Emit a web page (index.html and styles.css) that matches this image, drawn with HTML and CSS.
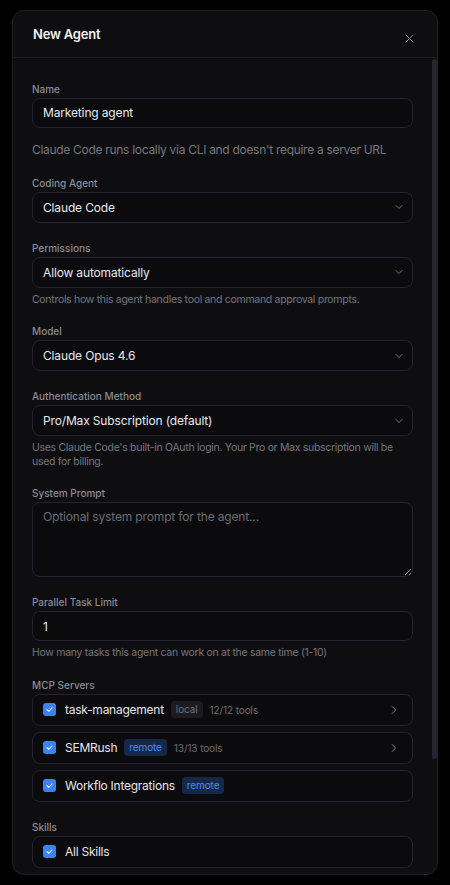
FILE: index.html
```html
<!DOCTYPE html>
<html lang="en">
<head>
<meta charset="utf-8">
<title>New Agent</title>
<link rel="stylesheet" href="styles.css">
</head>
<body>
<div class="overlay">
  <section class="dialog">
    <header class="dialog-header">
      <h2 class="dialog-title">New Agent</h2>
      <button class="close-btn" aria-label="Close">
        <svg width="10" height="10" viewBox="0 0 10 10"><path d="M1 1 9 9M9 1 1 9" stroke="currentColor" stroke-width="1.1" stroke-linecap="round"/></svg>
      </button>
    </header>
    <div class="dialog-body">
      <div class="field">
        <label class="label">Name</label>
        <input class="control input" type="text" value="Marketing agent">
      </div>
      <p class="note">Claude Code runs locally via CLI and doesn't require a server URL</p>

      <div class="field">
        <label class="label">Coding Agent</label>
        <div class="control select"><span>Claude Code</span>
          <svg class="chev-down" width="8" height="8" viewBox="0 0 8 8"><path d="M1 2.5 4 5.5 7 2.5" fill="none" stroke="currentColor" stroke-width="0.9" stroke-linecap="round" stroke-linejoin="round"/></svg>
        </div>
      </div>

      <div class="field">
        <label class="label">Permissions</label>
        <div class="control select"><span>Allow automatically</span>
          <svg class="chev-down" width="8" height="8" viewBox="0 0 8 8"><path d="M1 2.5 4 5.5 7 2.5" fill="none" stroke="currentColor" stroke-width="0.9" stroke-linecap="round" stroke-linejoin="round"/></svg>
        </div>
        <p class="help">Controls how this agent handles tool and command approval prompts.</p>
      </div>

      <div class="field">
        <label class="label">Model</label>
        <div class="control select"><span>Claude Opus 4.6</span>
          <svg class="chev-down" width="8" height="8" viewBox="0 0 8 8"><path d="M1 2.5 4 5.5 7 2.5" fill="none" stroke="currentColor" stroke-width="0.9" stroke-linecap="round" stroke-linejoin="round"/></svg>
        </div>
      </div>

      <div class="field">
        <label class="label">Authentication Method</label>
        <div class="control select"><span>Pro/Max Subscription (default)</span>
          <svg class="chev-down" width="8" height="8" viewBox="0 0 8 8"><path d="M1 2.5 4 5.5 7 2.5" fill="none" stroke="currentColor" stroke-width="0.9" stroke-linecap="round" stroke-linejoin="round"/></svg>
        </div>
        <p class="help">Uses Claude Code's built-in OAuth login. Your Pro or Max subscription will be used for billing.</p>
      </div>

      <div class="field">
        <label class="label">System Prompt</label>
        <textarea class="control textarea" placeholder="Optional system prompt for the agent..."></textarea>
      </div>

      <div class="field">
        <label class="label">Parallel Task Limit</label>
        <input class="control input" type="text" value="1">
        <p class="help">How many tasks this agent can work on at the same time (1-10)</p>
      </div>

      <div class="field">
        <label class="label">MCP Servers</label>
        <div class="list">
          <div class="row">
            <span class="check"><svg width="9" height="9" viewBox="0 0 10 10"><path d="M2.2 5.2 4.2 7 7.8 3.2" fill="none" stroke="#fff" stroke-width="1.2" stroke-linecap="round" stroke-linejoin="round"/></svg></span>
            <span class="row-name">task-management</span>
            <span class="badge badge-local">local</span>
            <span class="meta">12/12 tools</span>
            <svg class="chev-right" width="16" height="16" viewBox="0 0 16 16"><path d="M6.2 4.5 9.6 8 6.2 11.5" fill="none" stroke="currentColor" stroke-width="1" stroke-linecap="round" stroke-linejoin="round"/></svg>
          </div>
          <div class="row">
            <span class="check"><svg width="9" height="9" viewBox="0 0 10 10"><path d="M2.2 5.2 4.2 7 7.8 3.2" fill="none" stroke="#fff" stroke-width="1.2" stroke-linecap="round" stroke-linejoin="round"/></svg></span>
            <span class="row-name">SEMRush</span>
            <span class="badge badge-remote">remote</span>
            <span class="meta">13/13 tools</span>
            <svg class="chev-right" width="16" height="16" viewBox="0 0 16 16"><path d="M6.2 4.5 9.6 8 6.2 11.5" fill="none" stroke="currentColor" stroke-width="1" stroke-linecap="round" stroke-linejoin="round"/></svg>
          </div>
          <div class="row">
            <span class="check"><svg width="9" height="9" viewBox="0 0 10 10"><path d="M2.2 5.2 4.2 7 7.8 3.2" fill="none" stroke="#fff" stroke-width="1.2" stroke-linecap="round" stroke-linejoin="round"/></svg></span>
            <span class="row-name">Workflo Integrations</span>
            <span class="badge badge-remote">remote</span>
          </div>
        </div>
      </div>

      <div class="field">
        <label class="label">Skills</label>
        <div class="list">
          <div class="row">
            <span class="check"><svg width="9" height="9" viewBox="0 0 10 10"><path d="M2.2 5.2 4.2 7 7.8 3.2" fill="none" stroke="#fff" stroke-width="1.2" stroke-linecap="round" stroke-linejoin="round"/></svg></span>
            <span class="row-name">All Skills</span>
          </div>
        </div>
      </div>
    </div>
    <div class="scroll-thumb"></div>
  </section>
</div>
</body>
</html>
```
FILE: styles.css
```css
* { box-sizing: border-box; }

html, body {
  margin: 0;
  height: 100%;
  background: #000;
  font-family: Inter, "Noto Sans", sans-serif;
  color: #e6e6e9;
  overflow: hidden;
}

.overlay {
  padding: 9.5px 12px 0 12px;
}

.dialog {
  position: relative;
  height: 865px;
  background: #0e0e11;
  border: 1px solid #201f28;
  border-radius: 12px;
  overflow: hidden;
  display: flex;
  flex-direction: column;
}

.dialog-header {
  padding: 14px 20px 14px 20px;
  border-bottom: 1px solid #201f28;
}

.dialog-title {
  margin: 0;
  font-size: 13px;
  line-height: 18px;
  font-weight: 600;
  letter-spacing: -0.2px;
  color: #f2f2f4;
}

.close-btn {
  position: absolute;
  top: 23.5px;
  right: 23.5px;
  width: 9px;
  height: 9px;
  padding: 0;
  border: 0;
  background: none;
  color: #85858c;
  display: flex;
}
.close-btn svg { width: 9px; height: 9px; }

.dialog-body {
  flex: 1;
  overflow: hidden;
  padding: 24px 24px 0 19px;
}

.field + .field { margin-top: 18px; }
.note + .field { margin-top: 18px; }

.label {
  display: block;
  font-size: 10px;
  line-height: 14px;
  font-weight: 500;
  color: #8b8b93;
  margin-bottom: 2px;
}

.control {
  width: 100%;
  background: #0b0b0e;
  border: 1px solid #25232f;
  border-radius: 8px;
  color: #e8e8eb;
  font-family: inherit;
  font-size: 12px;
  letter-spacing: -0.15px;
  outline: none;
}

.input {
  display: block;
  height: 30px;
  padding: 0 10px;
}

.select {
  height: 31px;
  padding: 0 9px 0 10px;
  display: flex;
  align-items: center;
  justify-content: space-between;
}

.chev-down { color: #7f7f87; }

.textarea {
  display: block;
  height: 75px;
  padding: 6px 10px;
  line-height: 16px;
  resize: vertical;
}
.textarea::placeholder { color: #6c6c74; }

.note {
  margin: 14px 0 0;
  font-size: 12px;
  line-height: 16px;
  letter-spacing: -0.3px;
  color: #76767e;
}

.help {
  margin: 5px 0 0;
  font-size: 10.5px;
  line-height: 13.5px;
  letter-spacing: -0.3px;
  color: #75757d;
}

.list {
  display: flex;
  flex-direction: column;
  gap: 6px;
}

.row {
  height: 32px;
  border: 1px solid #25232f;
  border-radius: 8px;
  background: #0b0b0e;
  padding: 0 10px;
  display: flex;
  align-items: center;
  gap: 7px;
}

.check {
  width: 13px;
  height: 13px;
  border-radius: 3px;
  background: #3b82f6;
  display: flex;
  align-items: center;
  justify-content: center;
  margin-right: 2px;
}

.row-name {
  font-size: 12px;
  letter-spacing: -0.25px;
  color: #e6e6e9;
}

.badge {
  font-size: 10px;
  line-height: 17px;
  padding: 0 5px;
  border-radius: 4px;
  letter-spacing: -0.1px;
}
.badge-local { background: #1b1b20; color: #6f6f77; }
.badge-remote { background: #15284a; color: #4a8cf5; }

.meta {
  font-size: 10px;
  letter-spacing: -0.1px;
  color: #6b6b73;
}

.chev-right {
  margin-left: auto;
  color: #7f7f87;
}

.scroll-thumb {
  position: absolute;
  right: 0;
  top: 48px;
  width: 5px;
  height: 700px;
  background: #252430;
  border-radius: 3px;
}
```
